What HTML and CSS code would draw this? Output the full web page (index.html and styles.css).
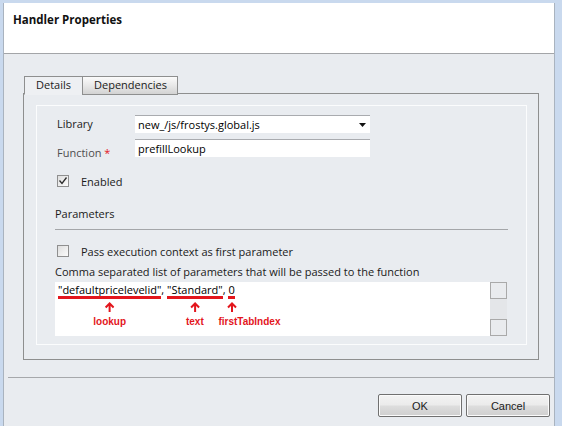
FILE: index.html
```html
<!DOCTYPE html>
<html>
<head>
<meta charset="utf-8">
<link rel="stylesheet" href="styles.css">
</head>
<body>
<div class="frame">
  <div class="dialog">
    <div class="header">
      <h1 class="title">Handler Properties</h1>
    </div>
    <div class="content">
      <div class="tabs">
        <div class="tab tab-active">Details</div>
        <div class="tab">Dependencies</div>
      </div>
      <div class="panel">
        <div class="inner">
          <div class="field-row">
            <span class="lbl">Library</span>
            <div class="select">
              <span>new_/js/frostys.global.js</span>
              <svg class="dd-arrow" width="7" height="4" viewBox="0 0 7 4"><path d="M0 0H7L3.5 4Z" fill="#111"/></svg>
            </div>
          </div>
          <div class="field-row">
            <span class="lbl lbl-req">Function <span class="req">*</span></span>
            <div class="input">prefillLookup</div>
          </div>
          <div class="check-row row-enabled">
            <span class="checkbox"><svg width="10" height="10" viewBox="0 0 10 10"><path d="M1.5 4.5L4 7.5L8.5 1.5" fill="none" stroke="#2b2b2b" stroke-width="1.3"/></svg></span>
            <span>Enabled</span>
          </div>
          <div class="section-title">Parameters</div>
          <div class="check-row row-pass">
            <span class="checkbox"></span>
            <span>Pass execution context as first parameter</span>
          </div>
          <div class="hint">Comma separated list of parameters that will be passed to the function</div>
          <div class="textarea">
            <div class="ta-text"><span class="mark">"defaultpricelevelid"<span class="anno"><svg width="10" height="10" viewBox="0 0 10 10"><path d="M5 1.5V10M1 5.5L5 1.5L9 5.5" fill="none" stroke="#e3161d" stroke-width="2"/></svg><b>lookup</b></span></span>, <span class="mark">"Standard"<span class="anno"><svg width="10" height="10" viewBox="0 0 10 10"><path d="M5 1.5V10M1 5.5L5 1.5L9 5.5" fill="none" stroke="#e3161d" stroke-width="2"/></svg><b>text</b></span></span>, <span class="mark">0<span class="anno anno-left"><svg width="10" height="10" viewBox="0 0 10 10"><path d="M5 1.5V10M1 5.5L5 1.5L9 5.5" fill="none" stroke="#e3161d" stroke-width="2"/></svg><b>firstTabIndex</b></span></span></div>
            <div class="scrollbar">
              <div class="sb-btn"></div>
              <div class="sb-track"></div>
              <div class="sb-btn"></div>
            </div>
          </div>
        </div>
      </div>
    </div>
    <div class="footer">
      <button class="btn">OK</button>
      <button class="btn">Cancel</button>
    </div>
  </div>
</div>
</body>
</html>
```

FILE: styles.css
```css
* { box-sizing: border-box; }
html, body {
  margin: 0;
  width: 562px;
  height: 426px;
  overflow: hidden;
}
body {
  background: #c9d9ee;
  font-family: "Open Sans", "Noto Sans", sans-serif;
  font-size: 11px;
  color: #1a1a1a;
}
.frame {
  padding: 3px 7px 0 3px;
  height: 426px;
}
.dialog {
  height: 423px;
  background: #e9ecf0;
  border-left: 1px solid #a9b3bf;
  border-right: 1px solid #a9b3bf;
  display: flex;
  flex-direction: column;
}
.header {
  height: 51px;
  background: #fff;
  border-bottom: 1px solid #a3a5a8;
  padding: 8px 0 0 9px;
}
.title {
  margin: 0;
  font-size: 11.5px;
  font-weight: 700;
  line-height: 18px;
  color: #111;
}
.content {
  padding: 22px 15px 17px 19px;
}
.tabs {
  display: flex;
  margin-left: 1px;
  height: 18px;
  position: relative;
  z-index: 1;
  margin-bottom: -1px;
}
.tab {
  height: 19px;
  border: 1px solid #8e8f8f;
  padding: 0 10px 0 11px;
  line-height: 16px;
  color: #1a1a1a;
  background: linear-gradient(#fbfbfb, #e6e6e6 55%, #d3d3d3);
}
.tab-active {
  background: #eef0f3;
  border-bottom-color: #eef0f3;
  border-right: none;
  padding-right: 11px;
}
.panel {
  border: 1px solid #8e8f8f;
  padding: 11px 11px 14px 12px;
}
.inner {
  border: 1px solid #fbfcfd;
  padding: 9px 18px 8px 18px;
}
.field-row {
  display: flex;
  height: 18px;
  margin-bottom: 6px;
}
.lbl {
  width: 80px;
  padding-left: 2px;
  line-height: 18px;
  color: #222;
}
.lbl-req {
  padding-top: 5px;
  color: #4e4e4e;
}
.req { color: #e3161d; }
.select, .input {
  width: 235px;
  height: 18px;
  background: #fff;
  border-top: 1px solid #a9abaf;
  padding-left: 3px;
  line-height: 16px;
  color: #000;
  display: flex;
  align-items: center;
  justify-content: space-between;
}
.dd-arrow { margin-right: 4px; }
.check-row {
  display: flex;
  align-items: center;
  height: 12px;
  padding-left: 2px;
}
.row-enabled { margin-top: 18px; }
.row-pass { margin-top: 15px; }
.checkbox {
  width: 12px;
  height: 12px;
  border: 1px solid #8f8f8f;
  background: linear-gradient(135deg, #dedede, #fbfbfb);
  margin-right: 12px;
  display: flex;
  align-items: center;
  justify-content: center;
}
.section-title {
  margin-top: 19px;
  line-height: 16px;
  padding-bottom: 7px;
  border-bottom: 1px solid #a4a6a9;
}
.hint {
  margin-top: 7px;
  line-height: 16px;
}
.textarea {
  margin-top: 2px;
  margin-right: 1px;
  height: 54px;
  background: #fff;
  display: flex;
}
.ta-text {
  flex: 1;
  padding: 0 0 0 3px;
  line-height: 16px;
  color: #000;
}
.mark {
  position: relative;
  display: inline-block;
}
.mark::after {
  content: "";
  position: absolute;
  left: 0;
  right: 0;
  bottom: -1px;
  height: 3px;
  background: #e3161d;
}
.anno {
  position: absolute;
  top: 20px;
  left: 50%;
  transform: translateX(-50%);
  display: flex;
  flex-direction: column;
  align-items: center;
  gap: 5px;
}
.anno b {
  font-family: "Liberation Sans", Arial, sans-serif;
  font-size: 10px;
  line-height: 10px;
  color: #e3161d;
  white-space: nowrap;
}
.anno-left {
  left: -10px;
  transform: none;
  align-items: flex-start;
}
.anno-left svg { margin-left: 9px; }
.scrollbar {
  width: 17px;
  display: flex;
  flex-direction: column;
  background: #e4e6e9;
}
.sb-btn {
  height: 17px;
  border: 1px solid #a9a9a9;
  background: #e9ebee;
}
.sb-track { flex: 1; }
.footer {
  margin-left: 4px;
  border-top: 1px solid #a6a8ab;
  padding: 16px 4px 0 0;
  display: flex;
  justify-content: flex-end;
  gap: 4px;
}
.btn {
  width: 84px;
  height: 23px;
  border: 1px solid #707070;
  border-radius: 2px;
  background: linear-gradient(#f3f3f3, #ebebeb 48%, #dddddd 52%, #cfcfcf);
  box-shadow: inset 0 0 0 1px #fbfbfb;
  font-family: "Liberation Sans", Arial, sans-serif;
  font-size: 11px;
  color: #1b1b1b;
  padding: 0;
}
```
